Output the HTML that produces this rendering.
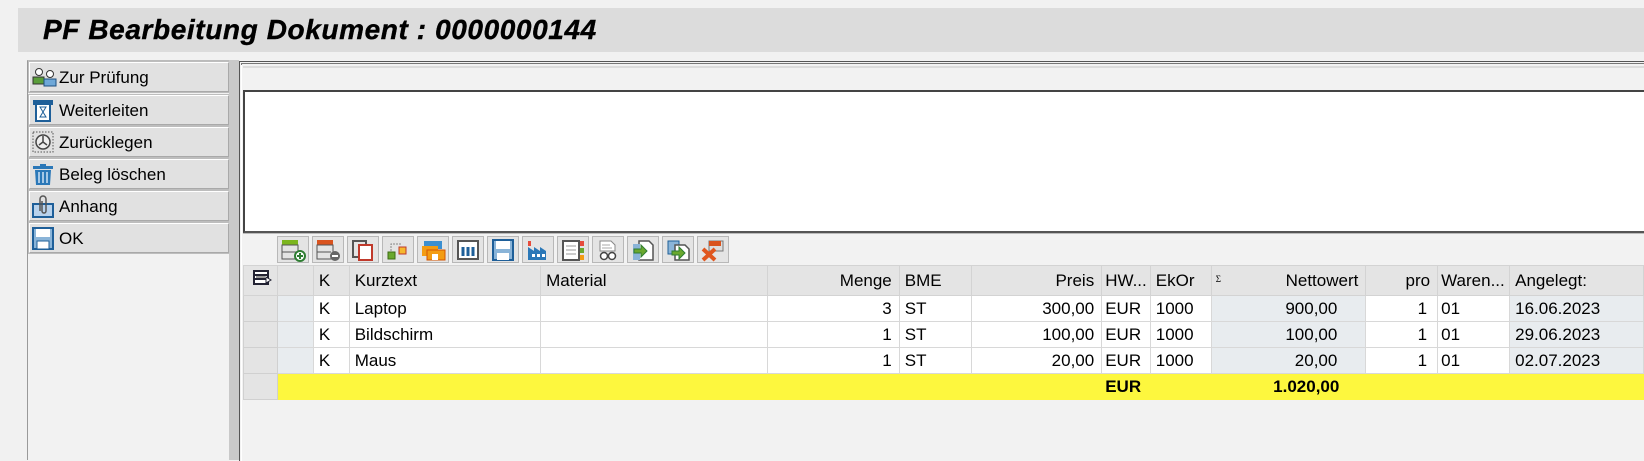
<!DOCTYPE html>
<html><head><meta charset="utf-8">
<style>
*{margin:0;padding:0;box-sizing:border-box}
body{width:1644px;height:448px;background:#f1f1f1;position:relative;overflow:hidden;font-family:"Liberation Sans","DejaVu Sans",sans-serif;color:#000}
.abs{position:absolute}
#title{left:18px;top:8px;width:1626px;height:44px;background:#dcdcdc}
#title span{position:absolute;left:25px;top:6px;font-size:28px;font-weight:bold;font-style:italic;letter-spacing:0.6px;-webkit-text-stroke:0.4px #000}
#lp{left:27px;top:60px;width:202px;height:400px;border-left:1px solid #9a9a9a;border-top:1px solid #bbb;background:#f2f2f2}
.btn{position:absolute;left:29px;width:200px;height:30px;background:#e1e1e1;border:1px solid #a9a9a9;border-top-color:#fff;border-left-color:#fff;outline:1px solid #bdbdbd;font-size:17px}
.btn svg{position:absolute;left:2px;top:3px}
.btn span{position:absolute;left:29px;top:5px}
#bar{left:229px;top:60px;width:10px;height:400px;background:#c9c9c9}
#main{left:239px;top:61px;width:1405px;height:400px;border-left:1px solid #555;border-top:1px solid #555;background:#f2f2f2}
#main:before{content:"";position:absolute;left:1px;top:1px;right:0;bottom:0;border-left:1px solid #fff;border-top:1px solid #fff}
#l2{left:241px;top:63px;width:1403px;height:2px;border-top:1px solid #777;border-left:1px solid #777}
#l3{left:243px;top:66px;width:1401px;height:2px;background:#dcdcdc}
#white{left:243px;top:90px;width:1401px;height:143px;background:#fff;border-top:2px solid #444;border-left:2px solid #444;border-bottom:2px solid #555}
.tb{position:absolute;top:236px;width:32px;height:27px;background:#e4e4e4;border:1px solid #b8b8b8}
.tb svg{position:absolute;left:3px;top:2px}
table{position:absolute;left:243px;top:265px;border-collapse:collapse;table-layout:fixed;font-size:17px}
td{border:1px solid #d8d8d8;height:26px;padding:0 5px;white-space:nowrap;overflow:hidden;background:#fff}
tr.h td{background:#e4e4e4;height:30px;border-color:#d3d3d3}
td.s{background:#e4e4e4;border-color:#d0d0d0}
td.b{background:#e8ecef}
td.r{text-align:right;padding-right:7px}
tr.y td{background:#fdf73e;font-weight:bold;border-color:#fdf73e}
tr.y td.s{background:#e4e4e4;border-color:#d0d0d0}
</style></head><body>
<div id="title" class="abs"><span>PF Bearbeitung Dokument : 0000000144</span></div>
<div id="lp" class="abs"></div>
<div class="btn" style="top:62px"><svg width="26" height="24" viewBox="0 0 26 24"><circle cx="7" cy="6" r="3.5" fill="#fff" stroke="#333"/><rect x="1" y="11" width="11" height="7" fill="#5a9e3a" stroke="#333"/><circle cx="18" cy="8" r="3.5" fill="#fff" stroke="#333"/><rect x="12" y="13" width="12" height="7" fill="#6fa8d8" stroke="#1e4f80"/></svg><span>Zur Prüfung</span></div>
<div class="btn" style="top:95px"><svg width="26" height="24" viewBox="0 0 26 24"><rect x="1" y="1" width="20" height="5" fill="#1e5f99"/><rect x="4" y="5" width="14" height="17" fill="#fff" stroke="#1e5f99" stroke-width="2"/><path d="M8 8h6l-3 5 3 5H8l3-5z" fill="none" stroke="#1e5f99"/></svg><span>Weiterleiten</span></div>
<div class="btn" style="top:127px"><svg width="26" height="24" viewBox="0 0 26 24"><rect x="1" y="1" width="20" height="20" fill="none" stroke="#555" stroke-dasharray="1.5 1.5"/><circle cx="11" cy="11" r="7" fill="#eee" stroke="#444" stroke-width="1.5"/><path d="M11 11V5M11 11l-4 3M11 11l4 3" stroke="#444" stroke-width="1.5"/></svg><span>Zurücklegen</span></div>
<div class="btn" style="top:159px"><svg width="26" height="24" viewBox="0 0 26 24"><rect x="1" y="3" width="20" height="3" fill="#2b78b8"/><rect x="8" y="1" width="6" height="3" fill="#2b78b8"/><path d="M3 7h16l-1 15H4z" fill="#2b78b8"/><path d="M7 9v11M11 9v11M15 9v11" stroke="#cfe3f5" stroke-width="1.5"/></svg><span>Beleg löschen</span></div>
<div class="btn" style="top:191px"><svg width="26" height="24" viewBox="0 0 26 24"><rect x="1" y="9" width="20" height="13" fill="#b8d2ec" stroke="#1e5f99" stroke-width="2"/><path d="M8 16V4a3 3 0 0 1 6 0v12a2 2 0 0 1-4 0V6" fill="none" stroke="#555" stroke-width="1.5"/></svg><span>Anhang</span></div>
<div class="btn" style="top:223px"><svg width="26" height="24" viewBox="0 0 26 24"><rect x="1" y="1" width="20" height="21" fill="#8ab4d8" stroke="#1e5f99" stroke-width="2"/><rect x="4" y="2" width="14" height="8" fill="#fff"/><rect x="5" y="14" width="12" height="8" fill="#fff" stroke="#1e5f99"/></svg><span>OK</span></div>
<div id="bar" class="abs"></div>
<div id="main" class="abs"></div>
<div id="l2" class="abs"></div>
<div id="l3" class="abs"></div>
<div id="white" class="abs"></div>
<div class="abs" style="left:243px;top:233px;width:1401px;height:1px;background:#bbb"></div>

<div class="tb" style="left:277px"><svg width="26" height="23"><rect x="1" y="1" width="16" height="5" fill="#7bb51e"/><rect x="1" y="6" width="16" height="14" fill="none" stroke="#555"/><path d="M1 13h14" stroke="#555"/><circle cx="19" cy="17" r="5" fill="#fff" stroke="#2e7d32" stroke-width="2"/><path d="M16 17h6M19 14v6" stroke="#2e7d32" stroke-width="2"/></svg></div>
<div class="tb" style="left:312px"><svg width="26" height="23"><rect x="1" y="1" width="16" height="5" fill="#d9531e"/><rect x="1" y="6" width="16" height="14" fill="none" stroke="#555"/><path d="M1 13h14" stroke="#555"/><circle cx="19" cy="17" r="5" fill="#666"/><path d="M16 17h6" stroke="#fff" stroke-width="2"/></svg></div>
<div class="tb" style="left:347px"><svg width="26" height="23"><rect x="2" y="2" width="13" height="16" fill="none" stroke="#555" stroke-width="2"/><rect x="8" y="6" width="13" height="15" fill="#fff" stroke="#c0392b" stroke-width="2"/></svg></div>
<div class="tb" style="left:382px"><svg width="26" height="23"><path d="M5 12V5h10" fill="none" stroke="#888" stroke-dasharray="2 1"/><rect x="2" y="13" width="7" height="7" fill="#6aa82e" stroke="#3d6b14"/><rect x="13" y="8" width="7" height="7" fill="#f5b82e" stroke="#c0392b"/></svg></div>
<div class="tb" style="left:417px"><svg width="26" height="23"><rect x="3" y="2" width="18" height="8" fill="#3b8fd0"/><rect x="1" y="7" width="16" height="10" fill="#f39c12"/><rect x="6" y="11" width="18" height="10" fill="#f39c12" stroke="#d35400"/><rect x="11" y="15" width="6" height="6" fill="#fff"/></svg></div>
<div class="tb" style="left:452px"><svg width="26" height="23"><rect x="2" y="2" width="20" height="18" fill="#fff" stroke="#555" stroke-width="2"/><path d="M7 8v9M12 8v9M17 8v9" stroke="#1e5f99" stroke-width="3"/></svg></div>
<div class="tb" style="left:487px"><svg width="26" height="23"><rect x="2" y="1" width="20" height="20" fill="#8ab4d8" stroke="#1e5f99" stroke-width="2"/><rect x="5" y="2" width="14" height="8" fill="#fff"/><rect x="6" y="14" width="12" height="7" fill="#fff"/></svg></div>
<div class="tb" style="left:522px"><svg width="26" height="23"><rect x="2" y="2" width="3" height="5" fill="#e74c3c"/><path d="M2 21V8l6 4V8l6 4V8l6 4v9z" fill="#2b78b8"/><rect x="6" y="15" width="3" height="3" fill="#fff"/><rect x="11" y="15" width="3" height="3" fill="#fff"/><rect x="16" y="15" width="3" height="3" fill="#fff"/></svg></div>
<div class="tb" style="left:557px"><svg width="26" height="23"><rect x="2" y="2" width="16" height="19" fill="#fff" stroke="#555" stroke-width="2"/><path d="M5 7h10M5 11h10M5 15h10" stroke="#999"/><rect x="19" y="2" width="4" height="5" fill="#e74c3c"/><rect x="19" y="9" width="4" height="5" fill="#6aa82e"/><rect x="19" y="16" width="4" height="5" fill="#f39c12"/></svg></div>
<div class="tb" style="left:592px"><svg width="26" height="23"><path d="M4 2h11l4 4v6H4z" fill="#fff" stroke="#888"/><path d="M6 6h8M6 9h10" stroke="#aaa"/><circle cx="8" cy="17" r="3.5" fill="#fff" stroke="#444" stroke-width="1.5"/><circle cx="16" cy="17" r="3.5" fill="#fff" stroke="#444" stroke-width="1.5"/></svg></div>
<div class="tb" style="left:627px"><svg width="26" height="23"><path d="M8 2h10l4 4v15H8z" fill="#fff" stroke="#555" stroke-width="1.5"/><rect x="2" y="5" width="7" height="16" fill="#8ab4d8"/><path d="M3 10h7V6l6 6-6 6v-4H3z" fill="#6aa82e" stroke="#2e7d32"/></svg></div>
<div class="tb" style="left:662px"><svg width="26" height="23"><rect x="2" y="2" width="11" height="13" fill="#8ab4d8" stroke="#1e5f99"/><path d="M9 6h10l4 4v11H9z" fill="#fff" stroke="#555" stroke-width="1.5"/><path d="M6 12h7V8l6 6-6 6v-4H6z" fill="#6aa82e" stroke="#2e7d32"/></svg></div>
<div class="tb" style="left:697px"><svg width="26" height="23"><rect x="8" y="2" width="14" height="10" fill="#ddd" stroke="#777"/><rect x="8" y="2" width="12" height="5" fill="#d9531e"/><path d="M2 10l12 11M14 10L2 21" stroke="#e0561e" stroke-width="4"/></svg></div>

<table>
<colgroup><col style="width:34px"><col style="width:36px"><col style="width:36px"><col style="width:192px"><col style="width:228px"><col style="width:132px"><col style="width:72px"><col style="width:131px"><col style="width:48px"><col style="width:61px"><col style="width:155px"><col style="width:72px"><col style="width:72px"><col style="width:134px"></colgroup>
<tr class="h"><td style="padding:0 0 0 9px"><svg width="20" height="18"><rect x="1" y="2" width="14" height="13" fill="#fff" stroke="#223" stroke-width="2"/><path d="M1 6h14M1 10h14" stroke="#223" stroke-width="2"/><rect x="3" y="7" width="9" height="2" fill="#999"/><path d="M13 8l5 3-5 3z" fill="#fff" stroke="#223"/></svg></td><td></td><td>K</td><td>Kurztext</td><td>Material</td><td class="r">Menge</td><td>BME</td><td class="r">Preis</td><td style="padding:0 3px">HW...</td><td>EkOr</td><td class="r" style="position:relative"><span style="position:absolute;left:4px;top:8px;font-size:9px;font-family:'Liberation Serif',serif">Σ</span>Nettowert</td><td class="r">pro</td><td style="padding:0 3px">Waren...</td><td>Angelegt:</td></tr>
<tr><td class="s"></td><td class="b"></td><td>K</td><td>Laptop</td><td></td><td class="r">3</td><td>ST</td><td class="r">300,00</td><td style="padding:0 3px">EUR</td><td>1000</td><td class="b r" style="padding-right:28px">900,00</td><td class="r" style="padding-right:10px">1</td><td style="padding:0 3px">01</td><td class="b">16.06.2023</td></tr>
<tr><td class="s"></td><td class="b"></td><td>K</td><td>Bildschirm</td><td></td><td class="r">1</td><td>ST</td><td class="r">100,00</td><td style="padding:0 3px">EUR</td><td>1000</td><td class="b r" style="padding-right:28px">100,00</td><td class="r" style="padding-right:10px">1</td><td style="padding:0 3px">01</td><td class="b">29.06.2023</td></tr>
<tr><td class="s"></td><td class="b"></td><td>K</td><td>Maus</td><td></td><td class="r">1</td><td>ST</td><td class="r">20,00</td><td style="padding:0 3px">EUR</td><td>1000</td><td class="b r" style="padding-right:28px">20,00</td><td class="r" style="padding-right:10px">1</td><td style="padding:0 3px">01</td><td class="b">02.07.2023</td></tr>
<tr class="y"><td class="s"></td><td></td><td></td><td></td><td></td><td></td><td></td><td></td><td style="padding:0 3px">EUR</td><td></td><td class="r" style="padding-right:26px">1.020,00</td><td></td><td></td><td></td></tr>
</table>
</body></html>
